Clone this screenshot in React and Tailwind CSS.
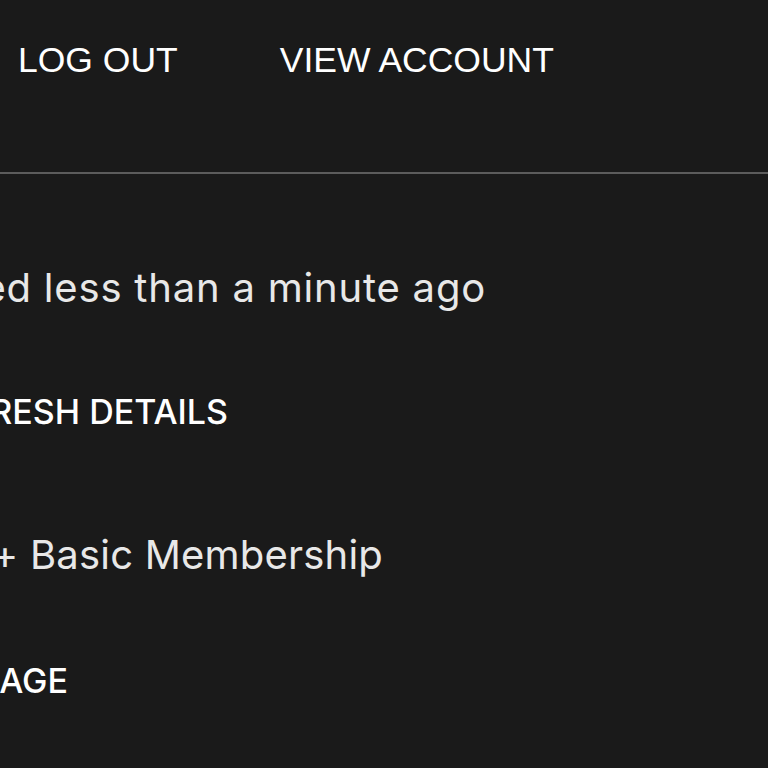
export default function App() {
  return (
    <div className="h-[768px] w-[768px] overflow-hidden bg-[#1a1a1a] text-white">
      <nav className="flex h-[172px] items-start gap-[102px] pl-[18px] pt-[40px] font-['Liberation_Sans',Arial,sans-serif] text-[35.5px] leading-[40px]">
        <button className="whitespace-nowrap">LOG OUT</button>
        <button className="whitespace-nowrap">VIEW ACCOUNT</button>
      </nav>
      <div className="h-[2px] bg-[#5c5c5c]" />

      <div className="flex flex-col font-['Inter','Noto_Sans',sans-serif]">
        <div className="mt-[90px] flex w-[486px] justify-end">
          <p className="shrink-0 whitespace-nowrap text-[40px] leading-[48px] tracking-[0.02em] text-[#e8e8e8]">
            Last updated less than a minute ago
          </p>
        </div>
        <div className="mt-[76px] flex w-[228px] justify-end">
          <button className="shrink-0 whitespace-nowrap text-[34px] font-medium leading-[48px]">
            REFRESH DETAILS
          </button>
        </div>
        <div className="mt-[95px] flex w-[383px] justify-end">
          <p className="shrink-0 whitespace-nowrap text-[40px] leading-[48px] tracking-[0.005em] text-[#e8e8e8]">
            Netflix + Basic Membership
          </p>
        </div>
        <div className="mt-[78px] flex w-[68px] justify-end">
          <button className="shrink-0 whitespace-nowrap text-[34px] font-medium leading-[48px]">
            MANAGE
          </button>
        </div>
      </div>
    </div>
  );
}
